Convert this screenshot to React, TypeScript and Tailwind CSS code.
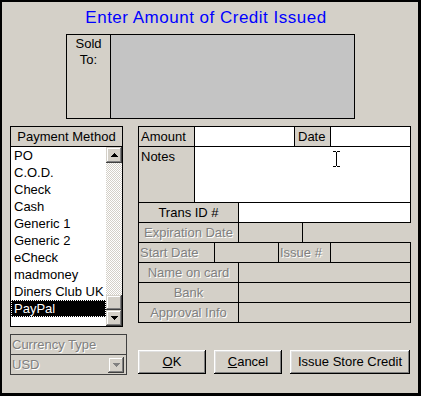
import React from "react";

const dis = "text-[#808080] [text-shadow:1px_1px_0_#ffffff]";
const raised =
  "bg-[#d4d0c8] shadow-[inset_-1px_-1px_#404040,inset_1px_1px_#d4d0c8,inset_-2px_-2px_#808080,inset_2px_2px_#ffffff]";

const methods = [
  "PO",
  "C.O.D.",
  "Check",
  "Cash",
  "Generic 1",
  "Generic 2",
  "eCheck",
  "madmoney",
  "Diners Club UK",
  "PayPal",
];

const Arrow: React.FC<{ down?: boolean; color?: string }> = ({ down, color = "#000" }) => (
  <svg width="7" height="4" viewBox="0 0 7 4" shapeRendering="crispEdges" className={down ? "rotate-180" : ""}>
    <path d="M3 0h1v1H3z M2 1h3v1H2z M1 2h5v1H1z M0 3h7v1H0z" fill={color} />
  </svg>
);

const App: React.FC = () => {
  return (
    <div className="w-[421px] h-[396px] bg-[#d4d0c8] border-t-2 border-l-2 border-r-[3px] border-b-[3px] border-black box-border overflow-hidden font-['Liberation_Sans',Arial,sans-serif] text-[13px] text-black">
      {/* 제목 */}
      <div className="mt-[6px] h-[20px] leading-[20px] pr-[8px] text-center text-[17px] tracking-[0.5px] text-[#0000ff]">
        Enter Amount of Credit Issued
      </div>

      {/* Sold To */}
      <div className="mt-[6px] ml-[64px] w-[289px] h-[85px] border border-black flex">
        <div className="w-[44px] border-r border-black text-center leading-[16px] pt-[1px]">
          Sold
          <br />
          To:
        </div>
        <div className="flex-1 bg-[#c4c4c4]" />
      </div>

      <div className="mt-[7px] flex">
        {/* 왼쪽: 결제 수단 / 통화 */}
        <div className="ml-[8px] w-[117px] flex flex-col">
          <div className="w-[113px] h-[201px] border border-black flex flex-col">
            <div className="h-[20px] border-b border-black text-center leading-[19px]">Payment Method</div>
            <div className="flex flex-1 bg-white">
              <ul className="w-[95px] flex flex-col">
                {methods.map((m) => (
                  <li
                    key={m}
                    className={
                      m === "PayPal"
                        ? "h-[17px] leading-[17px] pl-[3px] bg-black text-white outline-1 outline-dotted outline-white -outline-offset-1"
                        : "h-[17px] leading-[17px] pl-[3px] whitespace-nowrap"
                    }
                  >
                    {m}
                  </li>
                ))}
              </ul>
              <div className="w-[16px] flex flex-col">
                <div className={`h-[16px] flex items-center justify-center ${raised}`}>
                  <Arrow />
                </div>
                <div className="flex-1 bg-[repeating-conic-gradient(#d4d0c8_0_25%,#ffffff_0_50%)] bg-[length:2px_2px]" />
                <div className={`h-[15px] ${raised}`} />
                <div className={`h-[16px] flex items-center justify-center ${raised}`}>
                  <Arrow down />
                </div>
              </div>
            </div>
          </div>

          <div className="mt-[7px] w-[117px] h-[41px] border border-[#404040] flex flex-col">
            <div className={`h-[20px] border-b border-[#404040] leading-[19px] pl-[1px] ${dis}`}>Currency Type</div>
            <div className="flex flex-1 items-center">
              <span className={`flex-1 pl-[1px] ${dis}`}>USD</span>
              <div className={`w-[16px] h-[16px] mr-[2px] flex items-center justify-center ${raised}`}>
                <Arrow down color="#808080" />
              </div>
            </div>
          </div>
        </div>

        {/* 오른쪽: 금액 / 카드 정보 */}
        <div className="ml-[11px] w-[273px] flex flex-col">
          <div className="border-b border-black flex flex-col">
            <div className="flex h-[20px] leading-[19px]">
              <div className="w-[56px] border-l border-t border-black pl-[2px]">Amount</div>
              <div className="w-[100px] border-l border-t border-black bg-white" />
              <div className="w-[36px] border-l border-t border-black pl-[3px]">Date</div>
              <div className="w-[81px] border-l border-t border-r border-black bg-white" />
            </div>
            <div className="flex h-[56px] leading-[19px]">
              <div className="w-[56px] border-l border-t border-black pl-[2px]">Notes</div>
              <div className="relative w-[217px] border-l border-t border-r border-black bg-white">
                <svg width="7" height="16" viewBox="0 0 7 16" shapeRendering="crispEdges" className="absolute left-[138px] top-[4px]">
                  <path d="M0 0h3v1H0z M4 0h3v1H4z M3 1h1v14H3z M0 15h3v1H0z M4 15h3v1H4z" fill="#000" />
                </svg>
              </div>
            </div>
            <div className="flex h-[20px] leading-[19px]">
              <div className="w-[100px] border-l border-t border-black text-center">Trans ID #</div>
              <div className="w-[173px] border-l border-t border-r border-black bg-white" />
            </div>
            <div className="flex h-[20px] leading-[19px]">
              <div className={`w-[100px] border-l border-t border-black text-center ${dis}`}>Expiration Date</div>
              <div className="w-[65px] border-l border-t border-r border-black" />
              <div className="w-[108px] border-t border-black" />
            </div>
            <div className="flex h-[20px] leading-[19px]">
              <div className={`w-[76px] border-l border-t border-black pl-[1px] ${dis}`}>Start Date</div>
              <div className="w-[64px] border-l border-t border-black" />
              <div className={`w-[52px] border-l border-t border-black pl-[1px] ${dis}`}>Issue #</div>
              <div className="w-[81px] border-l border-t border-r border-black" />
            </div>
            {["Name on card", "Bank", "Approval Info"].map((label) => (
              <div key={label} className="flex h-[20px] leading-[19px]">
                <div className={`w-[100px] border-l border-t border-black text-center ${dis}`}>{label}</div>
                <div className="w-[173px] border-l border-t border-r border-black" />
              </div>
            ))}
          </div>

          {/* 버튼 */}
          <div className="mt-[27px] flex gap-[8px]">
            <button className="w-[68px] h-[24px] bg-[#d4d0c8] shadow-[inset_-1px_-1px_#000000,inset_1px_1px_#ffffff,inset_-2px_-2px_#808080,inset_2px_2px_#dfdfdf]">
              <span className="underline">O</span>K
            </button>
            <button className="w-[68px] h-[24px] bg-[#d4d0c8] shadow-[inset_-1px_-1px_#000000,inset_1px_1px_#ffffff,inset_-2px_-2px_#808080,inset_2px_2px_#dfdfdf]">
              <span className="underline">C</span>ancel
            </button>
            <button className="w-[120px] h-[24px] bg-[#d4d0c8] shadow-[inset_-1px_-1px_#000000,inset_1px_1px_#ffffff,inset_-2px_-2px_#808080,inset_2px_2px_#dfdfdf]">
              Issue Store Credit
            </button>
          </div>
        </div>
      </div>
    </div>
  );
};

export default App;
